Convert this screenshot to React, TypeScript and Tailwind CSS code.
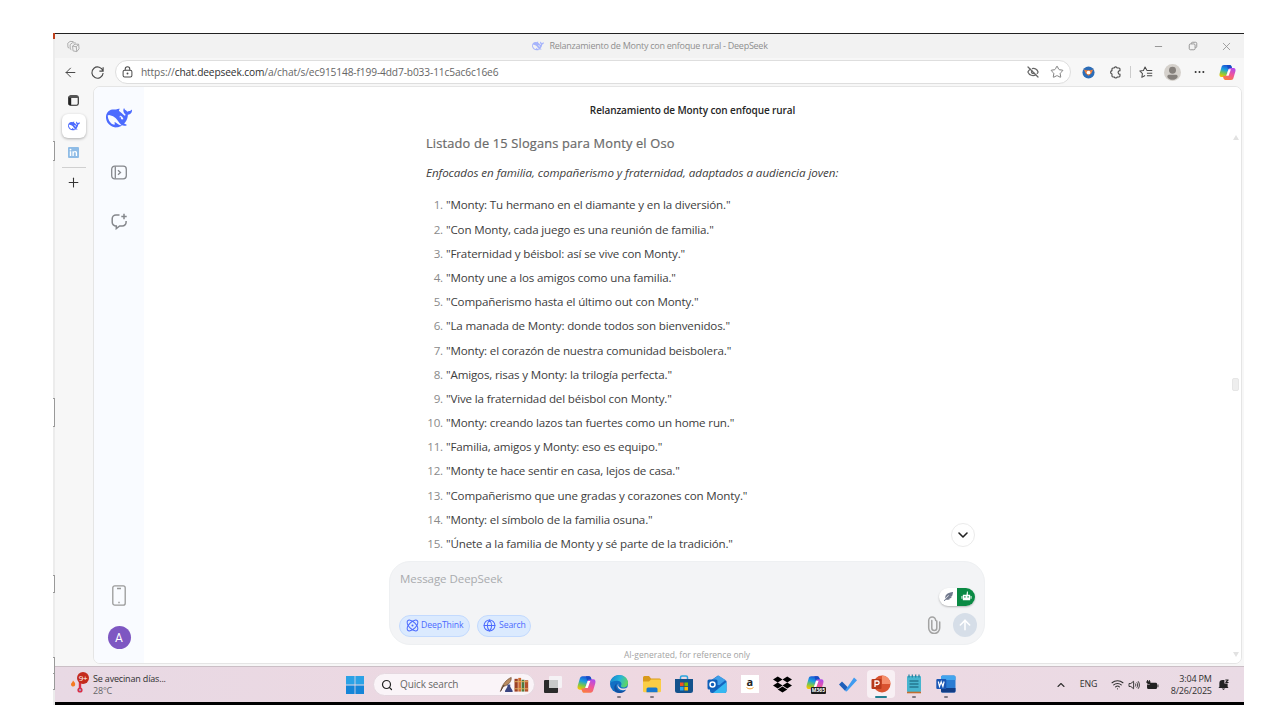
import React from "react";
import {
  ArrowLeft,
  ArrowUp,
  ChevronDown,
  ChevronUp,
  EyeOff,
  Globe,
  Minus,
  Plus,
  Search,
  Star,
  Wifi,
  X,
} from "lucide-react";
import { FaDropbox, FaFeatherAlt } from "react-icons/fa";

const slogans = [
  "Monty: Tu hermano en el diamante y en la diversión.",
  "Con Monty, cada juego es una reunión de familia.",
  "Fraternidad y béisbol: así se vive con Monty.",
  "Monty une a los amigos como una familia.",
  "Compañerismo hasta el último out con Monty.",
  "La manada de Monty: donde todos son bienvenidos.",
  "Monty: el corazón de nuestra comunidad beisbolera.",
  "Amigos, risas y Monty: la trilogía perfecta.",
  "Vive la fraternidad del béisbol con Monty.",
  "Monty: creando lazos tan fuertes como un home run.",
  "Familia, amigos y Monty: eso es equipo.",
  "Monty te hace sentir en casa, lejos de casa.",
  "Compañerismo que une gradas y corazones con Monty.",
  "Monty: el símbolo de la familia osuna.",
  "Únete a la familia de Monty y sé parte de la tradición.",
];

function Whale({ className }: { className: string }) {
  return (
    <svg viewBox="0 0 24 24" fill="currentColor" className={className}>
      <path d="M23.748 4.482c-.254-.124-.364.113-.512.234-.051.039-.094.09-.137.136-.372.397-.806.657-1.373.626-.829-.046-1.537.214-2.163.848-.133-.782-.575-1.248-1.247-1.548-.352-.156-.708-.311-.955-.65-.172-.241-.219-.51-.305-.774-.055-.16-.11-.323-.293-.35-.2-.031-.278.136-.356.276-.313.572-.434 1.202-.422 1.84.027 1.436.633 2.58 1.838 3.393.137.093.172.187.129.323-.082.28-.18.552-.266.833-.055.179-.137.217-.329.14a5.526 5.526 0 01-1.736-1.18c-.857-.828-1.631-1.742-2.597-2.458a11.365 11.365 0 00-.689-.471c-.985-.957.13-1.743.388-1.836.27-.098.093-.432-.779-.428-.872.004-1.67.295-2.687.684a3.055 3.055 0 01-.465.137 9.597 9.597 0 00-2.883-.102c-1.885.21-3.39 1.102-4.497 2.623C.082 8.606-.231 10.684.152 12.85c.403 2.284 1.569 4.175 3.36 5.653 1.858 1.533 3.997 2.284 6.438 2.14 1.482-.085 3.133-.284 4.994-1.86.47.234.962.327 1.78.397.63.059 1.236-.03 1.705-.128.735-.156.684-.837.419-.961-2.155-1.004-1.682-.595-2.113-.926 1.096-1.296 2.746-2.642 3.392-7.003.05-.347.007-.565 0-.845-.004-.17.035-.237.23-.256a4.173 4.173 0 001.545-.475c1.396-.763 1.96-2.015 2.093-3.517.02-.23-.004-.467-.247-.588zM11.581 18c-2.089-1.642-3.102-2.183-3.52-2.16-.392.024-.321.471-.235.763.09.288.207.486.371.739.114.167.192.416-.113.603-.673.416-1.842-.14-1.897-.167-1.361-.802-2.5-1.86-3.301-3.307-.774-1.393-1.224-2.887-1.298-4.482-.02-.386.093-.522.477-.592a4.696 4.696 0 011.529-.039c2.132.312 3.946 1.265 5.468 2.774.868.86 1.525 1.887 2.202 2.891.72 1.066 1.494 2.082 2.48 2.914.348.292.625.514.891.677-.802.09-2.14.11-3.054-.614zm1-6.44a.306.306 0 01.415-.287.302.302 0 01.2.288.306.306 0 01-.31.307.303.303 0 01-.304-.308zm3.11 1.596c-.2.081-.399.151-.59.16a1.245 1.245 0 01-.798-.254c-.274-.23-.47-.358-.552-.758a1.73 1.73 0 01.016-.588c.07-.327-.008-.537-.239-.727-.187-.156-.426-.199-.688-.199a.559.559 0 01-.254-.078c-.11-.054-.2-.19-.114-.358.028-.054.16-.186.192-.21.356-.202.767-.136 1.146.016.352.144.618.408 1.001.782.391.451.462.576.685.914.176.265.336.537.445.848.067.195-.019.354-.25.452z" />
    </svg>
  );
}

function Copilot({ className, id }: { className: string; id: string }) {
  return (
    <svg viewBox="0 0 24 24" className={className}>
      <defs>
        <linearGradient id={id + "a"} x1="0.6" y1="0" x2="0.3" y2="1">
          <stop offset="0" stopColor="#1b4fd6" />
          <stop offset="0.4" stopColor="#1a9fe0" />
          <stop offset="0.7" stopColor="#7bc74a" />
          <stop offset="1" stopColor="#f5c400" />
        </linearGradient>
        <linearGradient id={id + "b"} x1="0.7" y1="0" x2="0.3" y2="1">
          <stop offset="0" stopColor="#b24bea" />
          <stop offset="0.5" stopColor="#f0559a" />
          <stop offset="1" stopColor="#fb7d3c" />
        </linearGradient>
      </defs>
      <path d="M7 1.500H15c1.600 0 2.300 1 2.800 2.600L18.600 7h-3c-1.700 0-2.500.8-3 2.500L10.600 16c-.5 1.600-1.200 2.500-3 2.500H3.500C.8 18.500.2 16 .9 13.500L3.500 4.600C4 2.600 5 1.500 7 1.500z" fill={`url(#${id}a)`} />
      <path d="M17 22.500H9c-1.600 0-2.300-1-2.800-2.600L5.400 17h3c1.700 0 2.500-.8 3-2.500L13.400 8c.5-1.600 1.200-2.500 3-2.500h4.100c2.700 0 3.300 2.500 2.600 5l-2.600 8.900c-.5 2-1.500 3.100-3.500 3.100z" fill={`url(#${id}b)`} />
      <path d="M11.300 1.500H15c1.600 0 2.300 1 2.800 2.600l.5 1.500h-2c-2.300 0-3 .8-3.700 1z" fill="#174bc4" />
      <path d="M13.600 7.500h3.200l-3.200 9h-3.200z" fill="#fff" />
    </svg>
  );
}

function LeftEdge() {
  return (
    <div className="flex w-[2px] shrink-0 flex-col bg-[#ececec]">
      <div className="h-[6px] w-[3px] bg-[#c0401c]" />
      <div className="mt-[102px] h-[20px] border-y border-r border-[#999] bg-white" />
      <div className="mt-[237px] h-[29px] border-y border-r border-[#999] bg-white" />
      <div className="mt-[148px] h-[18px] border-y border-r border-[#999] bg-white" />
      <div className="mt-[64px] h-[17px] border-y border-r border-[#999] bg-white" />
      <div className="h-[16px] border-b border-r border-[#999] bg-white" />
    </div>
  );
}

function TitleBar() {
  return (
    <div className="flex h-[24px] shrink-0 items-center bg-[#f2f2f2] text-[#8f8f8f]">
      <svg viewBox="0 0 14 14" className="ml-[12px] size-[13px]" fill="none" stroke="#a8a8a8" strokeWidth="1">
        <path d="M6 6.500l2.500-2h4L13 9.500 10.500 12.500l-4-.8zM6 6.500l4 .8 2.500-2.800M10 7.300l.5 5.200" />
        <path d="M4.700 10.500L3.500 9.800 3.300 5 5.800 3l3.700.2M2.300 8.600L1 8 .8 3.500 3.300 1.500l3.700.2" />
      </svg>
      <Whale className="ml-[452px] size-[12px] text-[#a6b4fb]" />
      <span className="ml-[5.500px] w-[569.500px] whitespace-nowrap text-[9px] tracking-[-0.26px]">
        Relanzamiento de Monty con enfoque rural - DeepSeek
      </span>
      <Minus className="ml-[34px] size-[11px]" strokeWidth={2} />
      <svg viewBox="0 0 12 12" className="ml-[24px] size-[10px]" fill="none" stroke="currentColor" strokeWidth="1.100">
        <rect x="1.500" y="3.500" width="7" height="7" rx="1.500" />
        <path d="M4 3.300V3a1.500 1.500 0 011.500-1.500H9A1.500 1.500 0 0110.500 3v3.500A1.500 1.500 0 019 8h-.3" />
      </svg>
      <X className="ml-[22px] size-[13px]" strokeWidth={1.500} />
    </div>
  );
}

function Toolbar() {
  return (
    <div className="flex h-[28px] shrink-0 items-center text-[#4a4a4a]">
      <ArrowLeft className="ml-[8px] size-[15px]" strokeWidth={1.600} />
      <svg viewBox="0 0 16 16" className="ml-[12px] size-[15px]" fill="none" stroke="currentColor" strokeWidth="1.200">
        <path d="M13.800 6.500A6 6 0 1014 8.500M14 2.500v4h-4" />
      </svg>
      <div className="ml-[10px] flex h-[24px] w-[956px] items-center rounded-full border border-[#dedede] bg-white">
        <svg viewBox="0 0 12 13" className="ml-[6px] h-[12px] w-[11px]" fill="none" stroke="currentColor" strokeWidth="1.100">
          <rect x="1.200" y="4.500" width="9.600" height="7.500" rx="1.700" />
          <path d="M3.500 4.500V3.200a2.500 2.500 0 015 0v1.300" />
          <circle cx="6" cy="8.200" r=".5" fill="currentColor" />
        </svg>
        <span className="ml-[8px] w-[880px] pt-px whitespace-nowrap text-[10.200px] tracking-[-0.13px] text-[#666]">
          https://<span className="text-[#303030]">chat.deepseek.com</span>/a/chat/s/ec915148-f199-4dd7-b033-11c5ac6c16e6
        </span>
        <EyeOff className="ml-[6px] size-[12px] text-[#666]" strokeWidth={2.500} />
        <Star className="ml-[11px] size-[14px] text-[#777]" strokeWidth={1.600} />
      </div>
      <svg viewBox="0 0 14 14" className="ml-[11px] size-[13px]">
        <circle cx="7" cy="7" r="6.500" fill="#2c6db8" />
        <path d="M2 3.800L4.500 4.500h5L12 3.800 10 8.200 7 10.500 4 8.200z" fill="#f0803c" />
        <circle cx="7" cy="7" r="2" fill="#fff" />
      </svg>
      <svg viewBox="0 0 14 14" className="ml-[14px] size-[13px]" fill="none" stroke="currentColor" strokeWidth="1.200">
        <path d="M11.800 5V3.200a1 1 0 00-1-1H8.800a1.700 1.700 0 00-3.300 0H4.200a1 1 0 00-1 1V5a1.900 1.900 0 000 3.700v2.100a1 1 0 001 1h1.500a1.700 1.700 0 003.200 0h1.900a1 1 0 001-1V9a2 2 0 01-2-2 2 2 0 012-2z" />
      </svg>
      <div className="ml-[8px] h-[12px] w-px bg-[#ccc]" />
      <svg viewBox="0 0 15 14" className="ml-[8px] h-[13px] w-[14px]" fill="none" stroke="currentColor" strokeWidth="1.100" strokeLinejoin="round">
        <path d="M8.500 4.800L6.500 1 4.700 4.800.8 5.300l2.900 2.800-.7 4.100 3.500-1.900M8.500 4.800h5.700M8.500 7.800h5.700M8.500 10.600h5.700" />
      </svg>
      <svg viewBox="0 0 18 18" className="ml-[11px] size-[17px]">
        <circle cx="9" cy="9" r="9" fill="#d5d1cc" />
        <circle cx="9" cy="6.500" r="3.700" fill="#85807c" />
        <path d="M3.500 13.700c0-1.600 1-2.200 2.300-2.200h6.400c1.300 0 2.300.6 2.300 2.200-1 2-3 3-5.500 3s-4.500-1-5.500-3z" fill="#85807c" />
      </svg>
      <svg viewBox="0 0 12 4" className="ml-[13px] h-[4px] w-[11px]" fill="#303030">
        <circle cx="1.800" cy="2" r="1.100" />
        <circle cx="6" cy="2" r="1.100" />
        <circle cx="10.200" cy="2" r="1.100" />
      </svg>
      <Copilot className="ml-[14px] size-[17px]" id="tb" />
    </div>
  );
}

function TabStrip() {
  return (
    <div className="flex w-[38px] shrink-0 flex-col items-center pr-[1px]">
      <svg viewBox="0 0 12 12" className="mt-[9px] size-[11px]" fill="none" stroke="#222">
        <rect x=".8" y=".8" width="10.400" height="10.400" rx="2" strokeWidth="1.200" />
        <path d="M1 2.200h10" strokeWidth="2.200" stroke="#555" />
        <path d="M2.200 3v8" strokeWidth="2.600" />
      </svg>
      <div className="mt-[8px] flex size-[24px] items-center justify-center rounded-[6px] bg-white shadow-[0_1px_3px_rgba(0,0,0,0.3)]">
        <Whale className="size-[12px] text-[#4d6bfe]" />
      </div>
      <div className="mt-[9px] flex size-[11px] items-center justify-center rounded-[1px] bg-[#8fbce6]">
        <svg viewBox="0 0 10 10" className="size-[9px]" fill="#fff">
          <circle cx="1.700" cy="1.700" r="1" />
          <path d="M.9 3.500h1.600V9H.9zM3.800 3.500h1.500v.8c.3-.6.900-1 1.700-1 1.500 0 2 .9 2 2.500V9H7.500V6.200c0-.9-.2-1.500-1-1.500s-1.200.6-1.200 1.500V9H3.800z" />
        </svg>
      </div>
      <div className="mt-[9px] h-px w-[24px] bg-[#d0d0d0]" />
      <Plus className="mt-[7px] size-[15px] text-[#333]" strokeWidth={1.700} />
    </div>
  );
}

function ChatSidebar() {
  return (
    <div className="flex w-[50px] shrink-0 flex-col items-center bg-[#f9fbff] text-[#85878c]">
      <Whale className="mt-[18px] size-[26px] text-[#4d6bfe]" />
      <svg viewBox="0 0 16 14" className="mt-[34px] h-[15px] w-[16px]" fill="none" stroke="currentColor" strokeWidth="1.300">
        <rect x=".7" y=".7" width="14.600" height="12.600" rx="3" />
        <path d="M4.300 1v12M7 4.700L9.500 7 7 9.300" />
      </svg>
      <svg viewBox="0 0 17 17" className="mt-[33px] size-[17px]" fill="none" stroke="currentColor" strokeWidth="1.500">
        <path d="M8.500 2H5a3.800 3.800 0 00-3.800 3.800v3.400A3.800 3.800 0 005 13h.3v2.600L8.700 13h2.600a3.800 3.800 0 003.800-3.800V8M13 .800v5.400M10.300 3.500h5.400" />
      </svg>
      <svg viewBox="0 0 14 21" className="mt-[355px] h-[21px] w-[14px]" fill="none" stroke="#999" strokeWidth="1.300">
        <rect x=".8" y=".8" width="12.400" height="19.400" rx="2" />
        <path d="M5 3.500h4M6.300 17.500h1.400" />
      </svg>
      <div className="mt-[20px] flex size-[23px] items-center justify-center rounded-full bg-[#7e57c2] font-['Roboto',sans-serif] text-[12px] text-white">
        A
      </div>
    </div>
  );
}

function Composer() {
  return (
    <div className="mt-[5px] ml-[-37px] h-[84px] w-[596px] rounded-[21px] border border-[#eef0f2] bg-[#f3f4f6]">
      <div className="flex h-[34px] items-center pl-[10px]">
        <span className="text-[11.500px] tracking-[-0.05px] text-[#a9abae]">Message DeepSeek</span>
      </div>
      <div className="flex h-[48px] pl-[9px]">
        <div className="mt-[19px] flex h-[22px] w-[71px] items-center rounded-full border border-[#c3dafe] bg-[#dbeafe] pl-[6px] text-[#4d6bfe]">
          <svg viewBox="0 0 14 14" className="size-[13px] shrink-0" fill="none" stroke="currentColor" strokeWidth="1.100">
            <ellipse cx="7" cy="7" rx="7.300" ry="3.700" transform="rotate(45 7 7)" />
            <ellipse cx="7" cy="7" rx="7.300" ry="3.700" transform="rotate(-45 7 7)" />
            <circle cx="7" cy="7" r="1.100" fill="currentColor" stroke="none" />
          </svg>
          <span className="ml-[2px] text-[8.700px] tracking-[-0.12px]">DeepThink</span>
        </div>
        <div className="mt-[19px] ml-[7px] flex h-[22px] w-[54px] items-center rounded-full border border-[#c3dafe] bg-[#dbeafe] pl-[5px] text-[#4d6bfe]">
          <Globe className="size-[13px]" strokeWidth={1.900} />
          <span className="ml-[3px] text-[8.700px] tracking-[-0.12px]">Search</span>
        </div>
        <div className="ml-auto flex w-[60px] flex-col">
          <div className="mt-[-8px] ml-[15px] flex h-[18px] w-[36px] overflow-hidden rounded-full bg-white shadow-[0_1px_2px_rgba(0,0,0,0.25)]">
            <div className="flex w-[18px] items-center justify-center">
              <FaFeatherAlt className="size-[9px] text-[#70788c]" />
            </div>
            <div className="flex w-[18px] items-center justify-center bg-[#0a8a44]">
              <svg viewBox="0 0 12 12" className="size-[11px]" fill="#fff">
                <path d="M6.500 .5h1V4H6zM2 4h8v6H2zM.5 5.500h1v3h-1zM10.500 5.500h1v3h-1z" />
                <path d="M3.500 5.700h1.500v1.500H3.500zM7 5.700h1.500v1.500H7z" fill="#0a8a44" />
              </svg>
            </div>
          </div>
          <div className="mt-[7px] flex items-center">
            <svg viewBox="0 0 14 18" className="ml-[3px] h-[18px] w-[14px]" fill="none" stroke="#a3a3a3" strokeWidth="1.500" strokeLinecap="round">
              <path d="M9.800 5v7a2.500 2.500 0 01-5 0M4.800 12V4.500M12.700 6v6a5.500 5.500 0 01-11 0V4.500a3.500 3.500 0 017 0" />
            </svg>
            <div className="ml-[12px] flex size-[24px] items-center justify-center rounded-full bg-[#d6dee8] text-white">
              <ArrowUp className="size-[16px]" strokeWidth={2.300} />
            </div>
          </div>
        </div>
      </div>
    </div>
  );
}

function ChatPane() {
  return (
    <div className="flex min-w-0 flex-1 flex-col bg-white">
      <div className="flex h-[45px] items-center justify-center pt-px pl-[11px] text-[10px] font-semibold tracking-[-0.1px] text-[#262626]">
        Relanzamiento de Monty con enfoque rural
      </div>
      <div className="relative ml-[282px] w-[559px] text-[11.600px] tracking-[-0.16px] text-[#404040]">
        <h3 className="h-[21px] pt-px text-[12.800px] leading-[21px] font-medium tracking-[0.18px] whitespace-nowrap text-[#6a6a6a] [-webkit-text-stroke:0.2px_#6a6a6a]">
          Listado de 15 Slogans para Monty el Oso
        </h3>
        <p className="mt-[10px] h-[20px] leading-[20px] tracking-[-0.05px] whitespace-nowrap italic">
          Enfocados en familia, compañerismo y fraternidad, adaptados a audiencia joven:
        </p>
        <ol className="mt-[10px]">
          {slogans.map((s, i) => (
            <li key={s} className="flex h-[24.200px] items-center whitespace-nowrap">
              <span className="w-[17px] text-right text-[11.600px] text-[#8a8a8a]">{i + 1}.</span>
              <span className="ml-[3px]">"{s}"</span>
            </li>
          ))}
        </ol>
        <div className="absolute right-[10px] bottom-[115px] flex size-[24px] items-center justify-center rounded-full border border-[#ebebeb] bg-white">
          <ChevronDown className="size-[16px] text-[#222]" strokeWidth={2.400} />
        </div>
        <Composer />
        <div className="ml-[-37px] w-[596px] pt-[3px] text-center text-[8.500px] leading-[14px] tracking-[0px] text-[#a3a3a3]">
          AI-generated, for reference only
        </div>
      </div>
    </div>
  );
}

function Scrollbar() {
  return (
    <div className="flex w-[11px] shrink-0 flex-col items-center bg-white">
      <div className="mt-[48px] h-0 w-0 border-x-[3.500px] border-b-[5px] border-x-transparent border-b-[#e2e2e2]" />
      <div className="mt-[238px] h-[13px] w-[7px] rounded-[2px] border border-[#e6e6e6] bg-[#eeeeee]" />
      <div className="mt-auto mb-[6px] h-0 w-0 border-x-[3.500px] border-t-[5px] border-x-transparent border-t-[#e2e2e2]" />
    </div>
  );
}

const svgIcon = "size-[20px]";

const apps: { name: string; icon: React.ReactNode; state?: "open" | "active" }[] = [
  {
    name: "Task View",
    icon: (
      <svg viewBox="0 0 20 20" className={svgIcon}>
        <rect x="6" y="2" width="13" height="12" rx="1" fill="#f5f2f5" />
        <rect x="1" y="6" width="14" height="13" rx="1" fill="#2b2b2b" />
        <rect x="6" y="6" width="9" height="8" fill="#c9c9c9" />
      </svg>
    ),
  },
  { name: "Copilot", icon: <Copilot className="size-[19px]" id="task" /> },
  {
    name: "Edge",
    state: "open",
    icon: (
      <svg viewBox="0 0 20 20" className={svgIcon}>
        <defs>
          <linearGradient id="edgeTop" x1="0" y1="0.3" x2="1" y2="0.6">
            <stop offset="0" stopColor="#1686cf" />
            <stop offset="0.5" stopColor="#27b5d8" />
            <stop offset="1" stopColor="#62d85a" />
          </linearGradient>
        </defs>
        <circle cx="10" cy="10" r="9" fill="#1270c4" />
        <path d="M1 9.500C1.500 4.500 5.500 1 10 1c5 0 9 3.500 9 7.500 0 3-2 5-4.500 5-2 0-3-1-2.500-2 1-1.500.5-4-2.500-4.500C6 6.500 2 7.500 1 9.500z" fill="url(#edgeTop)" />
        <path d="M8.500 9c-2 1.500-2 4.500 0 6.500 2.300 2.300 6 2 8.500.200-2 3-5.500 4-9 2.800C4.500 17.200 4 11 8.500 9z" fill="#1450a0" />
        <path d="M9.500 9.500c-1 1.500-.2 3.500 2 4.500 2.500 1.200 5.200.5 7-.8l-1.200 2.300c-3 1.500-6 .800-7.800-1.200-1.300-1.500-1.200-3.500 0-4.800z" fill="#eddbe6" />
      </svg>
    ),
  },
  {
    name: "File Explorer",
    state: "open",
    icon: (
      <svg viewBox="0 0 20 20" className={svgIcon}>
        <path d="M1 3.500A1.500 1.500 0 012.500 2H7l2 2.500h8.500A1.500 1.500 0 0119 6v3H1z" fill="#d99a1c" />
        <path d="M1 7.500h6L9 5.500h10V17a1.300 1.300 0 01-1.300 1.300H2.300A1.300 1.300 0 011 17z" fill="#fbcd45" />
        <path d="M4.500 18.300V15a1.500 1.500 0 011.500-1.500h8a1.500 1.500 0 011.500 1.500v3.300z" fill="#1878cf" />
      </svg>
    ),
  },
  {
    name: "Store",
    icon: (
      <svg viewBox="0 0 20 20" className={svgIcon}>
        <path d="M6.500 6V3.500A1.500 1.500 0 018 2h4a1.500 1.500 0 011.500 1.500V6" fill="none" stroke="#2aa5df" strokeWidth="1.500" />
        <path d="M1 5h18v11.500a2.500 2.500 0 01-2.500 2.500h-13A2.500 2.500 0 011 16.500z" fill="#14528c" />
        <path d="M6 8.500h3.600v3.600H6z" fill="#f25022" />
        <path d="M10.400 8.500H14v3.600h-3.600z" fill="#7fba00" />
        <path d="M6 12.900h3.600v3.600H6z" fill="#2da9ef" />
        <path d="M10.400 12.900H14v3.600h-3.600z" fill="#ffb900" />
      </svg>
    ),
  },
  {
    name: "Outlook",
    icon: (
      <svg viewBox="0 0 20 20" className={svgIcon}>
        <path d="M3 7l8-5.500L19.500 7v10a2 2 0 01-2 2H5a2 2 0 01-2-2z" fill="#1466c0" />
        <path d="M5 6l6.500-4.500L18.500 6l-6 5H5z" fill="#3f9fe8" />
        <path d="M19.500 8v9a2 2 0 01-2 2H6z" fill="#35b8f2" />
        <rect x=".5" y="5.500" width="10" height="10" rx="1.500" fill="#0f5fb8" />
        <circle cx="5.500" cy="10.500" r="2.500" fill="none" stroke="#fff" strokeWidth="1.500" />
      </svg>
    ),
  },
  {
    name: "Amazon",
    icon: (
      <div className="flex size-[18px] flex-col items-center bg-white">
        <span className="text-[11px] leading-[13px] font-bold text-[#222]">a</span>
        <svg viewBox="0 0 8 3" className="-mt-[1px] h-[3px] w-[8px]" fill="none" stroke="#f4a236">
          <path d="M.5.500c2 1.800 5 1.800 7 0" />
        </svg>
      </div>
    ),
  },
  { name: "Dropbox", icon: <FaDropbox className="size-[19px] text-black" /> },
  {
    name: "Microsoft 365",
    icon: (
      <div className="relative size-[19px]">
        <Copilot className="size-[18px]" id="m365" />
        <div className="absolute right-[-1px] bottom-0 flex h-[7px] w-[15px] items-center justify-center rounded-[1px] bg-[#1c1c1c] text-[5px] leading-[7px] font-bold text-white">
          M365
        </div>
      </div>
    ),
  },
  {
    name: "To Do",
    icon: (
      <svg viewBox="0 0 20 20" className={svgIcon}>
        <path d="M1 10.500L4 7.500l6 6-3 3.200z" fill="#1f5fba" />
        <path d="M7 16.700L16 3.500l3 2.800-9.600 10.500c-.8.800-1.600.8-2.400-.100z" fill="#3f9bf0" />
      </svg>
    ),
  },
  {
    name: "PowerPoint",
    state: "active",
    icon: (
      <svg viewBox="0 0 20 20" className={svgIcon}>
        <circle cx="11" cy="10" r="8.500" fill="#d9532f" />
        <path d="M11 1.500a8.500 8.500 0 018.500 8.500H11z" fill="#f58f6c" />
        <rect x=".5" y="5" width="10" height="10" rx="1" fill="#b83a1b" />
        <path d="M4 13V7h2.300a1.700 1.700 0 010 3.600H4" fill="none" stroke="#fff" strokeWidth="1.300" />
      </svg>
    ),
  },
  {
    name: "Notepad",
    state: "open",
    icon: (
      <svg viewBox="0 0 20 20" className={svgIcon}>
        <rect x="3" y="2" width="14" height="16" rx="1" fill="#47b5cf" />
        <path d="M5 .5v3M8.300.5v3M11.700.5v3M15 .5v3" stroke="#267b99" strokeWidth="1.200" />
        <path d="M5.500 7h9M5.500 10h9M5.500 13h9" stroke="#125970" strokeWidth="1.200" />
        <path d="M3 18.500h14" stroke="#c26d2e" strokeWidth="1.600" />
      </svg>
    ),
  },
  {
    name: "Word",
    state: "open",
    icon: (
      <svg viewBox="0 0 20 20" className={svgIcon}>
        <rect x="5" y="1.500" width="14.500" height="17" rx="1.500" fill="#2b7cd3" />
        <path d="M5 3a1.500 1.500 0 011.500-1.500H18A1.500 1.500 0 0119.500 3v3H5z" fill="#42a5ee" />
        <path d="M5 14h14.500v3a1.500 1.500 0 01-1.500 1.500H6.500A1.500 1.500 0 015 17z" fill="#123d86" />
        <rect x=".3" y="5" width="10" height="10" rx="1" fill="#1a56b4" />
        <path d="M2.300 7.500l1.200 5 1.700-4.700 1.700 4.700 1.200-5" fill="none" stroke="#fff" strokeWidth="1.200" />
      </svg>
    ),
  },
];

function Taskbar() {
  return (
    <div className="flex h-[36px] shrink-0 items-center border-t border-[#cbbfc6] bg-linear-to-r from-[#e8d9e4] via-[#eed8e1] to-[#eadbe5] text-[#303030]">
      <div className="relative ml-[14px] h-[24px] w-[21px]">
        <svg viewBox="0 0 21 24" className="h-[24px] w-[21px]">
          <path d="M4 7.500c1.500 1.500 2.800 3 2 5-.8 1.500-3.700 1.400-4-.8C1.800 10 3.700 9.500 4 7.500z" fill="#f47a22" />
          <path d="M11 10v7" stroke="#d92e47" strokeWidth="2.400" strokeLinecap="round" />
          <circle cx="11" cy="17" r="2.600" fill="#d92e47" />
          <circle cx="11" cy="17" r=".9" fill="#8fc4ee" />
        </svg>
        <span className="absolute top-[-1px] left-[8px] flex size-[12px] items-center justify-center rounded-full bg-[#c42b1c] text-[8px] tracking-[-0.3px] text-white">
          9+
        </span>
      </div>
      <div className="ml-[3px] w-[253px] text-[9px] leading-[12px] whitespace-nowrap">
        <div className="tracking-[-0.17px]">Se avecinan días...</div>
        <div className="tracking-[-0.2px] text-[#666]">28°C</div>
      </div>
      <svg viewBox="0 0 18 18" className="size-[18px]" fill="#1585d8">
        <path d="M0 0h8.600v8.600H0zM9.400 0H18v8.600H9.400z" fill="#2ba2e6" />
        <path d="M0 9.400h8.600V18H0zM9.400 9.400H18V18H9.400z" />
      </svg>
      <div className="ml-[9px] flex h-[23px] w-[162px] items-center rounded-full border border-[#e5d8e0] bg-[#faf4f8] pl-[7px]">
        <Search className="size-[12px] text-[#222]" strokeWidth={2.400} />
        <span className="ml-[7px] w-[99px] text-[10px] tracking-[-0.14px] whitespace-nowrap text-[#666]">Quick search</span>
        <svg viewBox="0 0 32 18" className="h-[17px] w-[31px]">
          <path d="M1.500 15.500C3 9 7 4 12.500 1.500c.5 4-2.500 8-8 9.500" fill="#b98a60" stroke="#6b4a32" strokeWidth=".7" />
          <path d="M1 16.500l4-7" stroke="#4a3424" />
          <path d="M8.500 9h3v2.500l2.500 4V17H6v-1.500l2.500-4z" fill="#3a4580" />
          <path d="M16 3h3.500v13.500H16z" fill="#9c4124" />
          <path d="M20 2h3v14.500h-3z" fill="#cf6a2e" />
          <path d="M23.500 4h3v12.500h-3z" fill="#4d7a3c" />
          <path d="M27 4.500h3.500v12H27z" fill="#b6512c" />
          <path d="M16 6h14.500M16 13.500h14.500" stroke="#e2b160" />
        </svg>
      </div>
      <div className="ml-[2px] flex">
        {apps.map((a) => (
          <div key={a.name} className="flex h-[35px] w-[32.750px] flex-col items-center">
            <div
              className={
                a.state === "active"
                  ? "mt-[3px] flex h-[28px] w-[28px] shrink-0 flex-col items-center rounded-[4px] bg-[#f8f0f4]"
                  : "mt-[3px] flex h-[28px] w-[28px] shrink-0 flex-col items-center"
              }
            >
              <div className="mt-[4px] flex h-[20px] items-center">{a.icon}</div>
              {a.state === "active" && <div className="mt-[2px] h-[2px] w-[12px] rounded-full bg-[#217f91]" />}
              {a.state === "open" && <div className="mt-[2px] h-[2px] w-[4px] rounded-full bg-[#827982]" />}
            </div>
          </div>
        ))}
      </div>
      <ChevronUp className="ml-[92px] size-[12px]" strokeWidth={2.200} />
      <span className="ml-[13px] w-[18px] text-[8.800px] tracking-[-0.1px]">ENG</span>
      <Wifi className="ml-[13px] size-[13px]" strokeWidth={2} />
      <svg viewBox="0 0 14 12" className="ml-[4px] h-[10px] w-[12px]" fill="none" stroke="currentColor" strokeWidth="1.100">
        <path d="M1 4.200h2.200L6.500 1.500v9L3.200 7.800H1zM8.500 4.200c.8 1 .8 2.600 0 3.600M10.300 2.800c1.500 1.800 1.500 4.600 0 6.400M12 1.500c2 2.600 2 6.400 0 9" />
      </svg>
      <svg viewBox="0 0 14 11" className="ml-[6px] h-[10px] w-[13px]" fill="#222">
        <path d="M4 3h6.500A1.500 1.500 0 0112 4.500v4a1.500 1.500 0 01-1.500 1.500h-8A1.500 1.500 0 011 8.500V5h3zM12.500 5h1v3h-1zM1 0h1v1.500h1V0h1v1.500h.7V3L3 4.500H2L.3 3V1.500H1z" />
      </svg>
      <div className="ml-[12px] w-[41px] text-right text-[9px] leading-[12px] tracking-[-0.17px] whitespace-nowrap">
        <div>3:04 PM</div>
        <div>8/26/2025</div>
      </div>
      <svg viewBox="0 0 12 12" className="ml-[6px] size-[11px]" fill="#222">
        <path d="M1.500 8.500V4.500A3.500 3.500 0 015 1h2v4h3.500v3.500l1 1.200H.5zM4 10.300h4L6 12zM8 .5h3.500v1L9.800 3.300h1.700v1H8v-1l1.700-1.800H8z" />
      </svg>
    </div>
  );
}

export default function App() {
  return (
    <div className="flex h-[720px] w-[1280px] overflow-hidden bg-white pt-[33px] pb-[15px] pl-[53px] font-['Open_Sans',sans-serif]">
      <LeftEdge />
      <div className="flex w-[1189px] flex-col border-t border-[#222] bg-[#f7f7f7]">
        <TitleBar />
        <Toolbar />
        <div className="flex h-[580px] shrink-0 pb-[2px]">
          <TabStrip />
          <div className="flex w-[1149px] overflow-hidden rounded-[7px] border border-[#e5e5e5] bg-white">
            <ChatSidebar />
            <ChatPane />
            <Scrollbar />
          </div>
        </div>
        <Taskbar />
        <div className="h-[3px] shrink-0 bg-black" />
      </div>
    </div>
  );
}
